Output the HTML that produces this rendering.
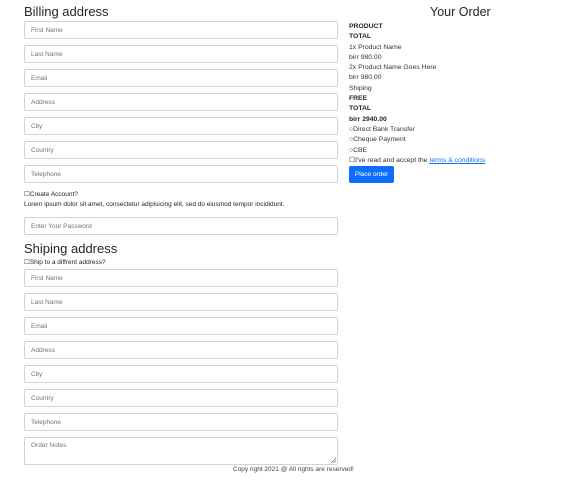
<!DOCTYPE html>
<html><head><style>
body{margin:0;width:561px;height:482px;background:#fff;font-family:"Liberation Sans",sans-serif;color:#212529;position:relative;overflow:hidden}
.a{position:absolute}
h2{position:absolute;margin:0;font-weight:500;font-size:13px;line-height:16px}
.in{position:absolute;left:24px;height:16px;border:1px solid #ced4da;border-radius:2px;font-size:6.5px;color:#6c757d;line-height:17px;padding-left:6px;box-sizing:content-box;width:306px}
.sm{position:absolute;font-size:6.5px;line-height:8px}
.r{position:absolute;left:349px;font-size:6.8px;line-height:10.3px;color:#333}
.r b{color:#212529}
</style></head><body>
<h2 style="left:24px;top:4px">Billing address</h2>
<h2 style="left:430px;top:4px;font-size:12.5px">Your Order</h2>
<div class="in" style="top:21px">First Name</div>
<div class="in" style="top:45px">Last Name</div>
<div class="in" style="top:69px">Email</div>
<div class="in" style="top:93px">Address</div>
<div class="in" style="top:117px">City</div>
<div class="in" style="top:141px">Country</div>
<div class="in" style="top:165px">Telephone</div>
<div class="sm" style="left:24px;top:191px">☐Create Account?</div>
<div class="sm" style="left:24px;top:201px">Lorem ipsum dolor sit amet, consectetur adipisicing elit, sed do eiusmod tempor incididunt.</div>
<div class="in" style="top:217px">Enter Your Password</div>
<h2 style="left:24px;top:241px">Shiping address</h2>
<div class="sm" style="left:24px;top:259px">☐Ship to a diffrent address?</div>
<div class="in" style="top:269px">First Name</div>
<div class="in" style="top:293px">Last Name</div>
<div class="in" style="top:317px">Email</div>
<div class="in" style="top:341px">Address</div>
<div class="in" style="top:365px">City</div>
<div class="in" style="top:389px">Country</div>
<div class="in" style="top:413px">Telephone</div>
<div class="in" style="top:437px;height:26px;line-height:16px">Order Notes
<svg style="position:absolute;right:1px;bottom:1px" width="6" height="6"><path d="M1 6L6 1M3.5 6L6 3.5" stroke="#666" stroke-width="0.7"/></svg></div>
<div class="sm" style="left:233px;top:466px;color:#444">Copy right 2021 @ All rights are reserved!</div>
<div class="r" style="top:22px"><b>PRODUCT</b><br><b>TOTAL</b><br>1x Product Name<br>birr 980.00<br>2x Product Name Goes Here<br>birr 980.00<br>Shiping<br><b>FREE</b><br><b>TOTAL</b><br><b>birr 2940.00</b><br>○Direct Bank Transfer<br>○Cheque Payment<br>○CBE<br>☐I've read and accept the <span style="color:#0d6efd;text-decoration:underline">terms &amp; conditions</span></div>
<div class="a" style="left:349px;top:166px;width:45px;height:17px;background:#0d6efd;border-radius:2px;color:#fff;font-size:6.5px;line-height:17px;text-align:center">Place order</div>
</body></html>
